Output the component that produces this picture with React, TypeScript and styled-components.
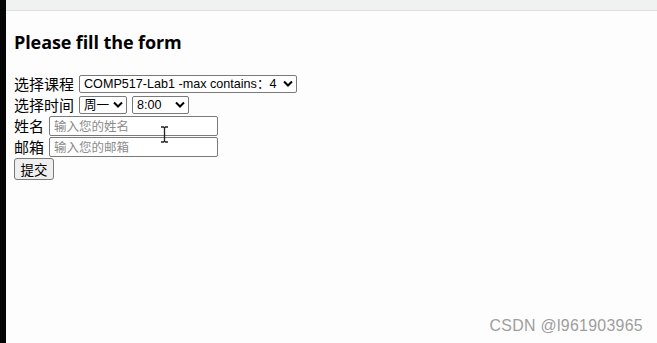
import React from 'react';
import styled, { createGlobalStyle } from 'styled-components';

const GlobalStyle = createGlobalStyle`
  html, body {
    margin: 0;
    padding: 0;
    background: #fdfdfd;
  }
  #root {
    height: 343px;
  }
`;

const Screen = styled.div`
  display: flex;
  width: 657px;
  height: 343px;
  overflow: hidden;
`;

const BlackEdge = styled.div`
  width: 6px;
  flex: none;
  background: #050505;
`;

const Browser = styled.div`
  flex: 1;
  display: flex;
  flex-direction: column;
  position: relative;
`;

const TabStrip = styled.div`
  height: 10px;
  flex: none;
  background: #f0f1f1;
  border-bottom: 1px solid #dcdede;
`;

const Page = styled.div`
  flex: 1;
  background: #fdfdfd;
  padding: 18px 0 0 8px;
  font-family: "Noto Sans CJK SC", "Noto Sans", sans-serif;
  color: #000;
`;

const Title = styled.h3`
  margin: 0 0 18px;
  font-family: "Open Sans", "Noto Sans", sans-serif;
  font-size: 18px;
  font-weight: 700;
  line-height: 26px;
  letter-spacing: -0.1px;
`;

const Form = styled.form`
  display: flex;
  flex-direction: column;
  align-items: flex-start;
`;

const Row = styled.div`
  display: flex;
  align-items: center;
  height: 21px;
  gap: 5px;
`;

const Label = styled.label`
  font-size: 15px;
  line-height: 19px;
`;

const Select = styled.select<{ $w: number }>`
  appearance: none;
  width: ${p => p.$w}px;
  height: 18px;
  box-sizing: border-box;
  border: 1px solid #7a7a7a;
  border-radius: 2px;
  background: #fff url("data:image/svg+xml;utf8,<svg xmlns='http://www.w3.org/2000/svg' width='10' height='7' viewBox='0 0 10 7'><path d='M1 1.5 L5 5.5 L9 1.5' fill='none' stroke='black' stroke-width='2'/></svg>") no-repeat right 3px center;
  padding: 0 10px 0 4px;
  font-family: "Liberation Sans", Arial, "Noto Sans CJK SC", sans-serif;
  font-size: 12.6px;
  color: #000;
  margin: 0;
`;

const TextInput = styled.input`
  width: 169px;
  height: 20px;
  box-sizing: border-box;
  border: 1px solid #7a7a7a;
  border-radius: 2px;
  padding: 0 4px;
  margin: 0;
  font-family: "Noto Sans CJK SC", sans-serif;
  font-size: 12.5px;
  background: #fff;
  &::placeholder {
    color: #8c8c8c;
  }
`;

const SubmitButton = styled.button`
  width: 40px;
  height: 22px;
  box-sizing: border-box;
  border: 1px solid #7a7a7a;
  border-radius: 3px;
  background: #efefef;
  font-family: "Noto Sans CJK SC", sans-serif;
  font-size: 13.5px;
  padding: 0;
  margin-top: 1px;
  color: #000;
`;

const Cursor = styled.svg`
  position: absolute;
  left: 154px;
  top: 126px;
`;

const Watermark = styled.div`
  position: absolute;
  right: 14px;
  bottom: 8px;
  font-family: "Liberation Sans", Arial, sans-serif;
  font-size: 15.9px;
  color: #9e9e9e;
  letter-spacing: 0.3px;
`;

export default function App() {
  return (
    <Screen>
      <GlobalStyle />
      <BlackEdge />
      <Browser>
        <TabStrip />
        <Page>
          <Title>Please fill the form</Title>
          <Form onSubmit={e => e.preventDefault()}>
            <Row>
              <Label>选择课程</Label>
              <Select $w={218} defaultValue="lab1">
                <option value="lab1">COMP517-Lab1 -max contains：4</option>
              </Select>
            </Row>
            <Row>
              <Label>选择时间</Label>
              <Select $w={48} defaultValue="mon">
                <option value="mon">周一</option>
              </Select>
              <Select $w={57} defaultValue="8">
                <option value="8">8:00</option>
              </Select>
            </Row>
            <Row>
              <Label>姓名</Label>
              <TextInput placeholder="输入您的姓名" />
            </Row>
            <Row>
              <Label>邮箱</Label>
              <TextInput placeholder="输入您的邮箱" />
            </Row>
            <SubmitButton type="submit">提交</SubmitButton>
          </Form>
        </Page>
        <Cursor width="9" height="17" viewBox="0 0 9 17">
          <path d="M1 1 H3.5 L4.5 2 L5.5 1 H8 M4.5 2 V15 M1 16 H3.5 L4.5 15 L5.5 16 H8" fill="none" stroke="#222" strokeWidth="1.3" />
        </Cursor>
        <Watermark>CSDN @l961903965</Watermark>
      </Browser>
    </Screen>
  );
}
